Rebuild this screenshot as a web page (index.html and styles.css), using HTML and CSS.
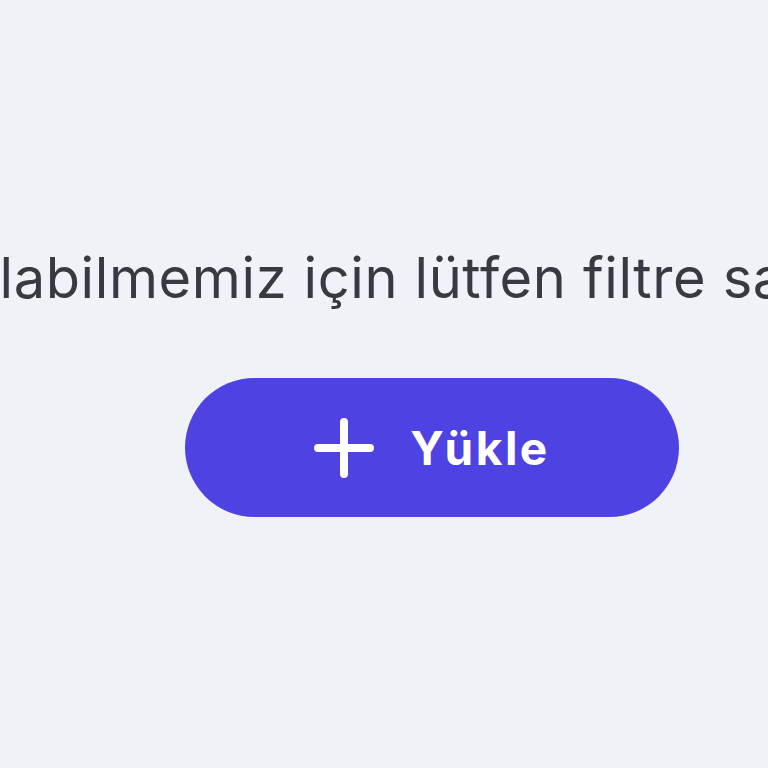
FILE: index.html
```html
<!DOCTYPE html>
<html lang="tr">
<head>
<meta charset="utf-8">
<link rel="stylesheet" href="styles.css">
</head>
<body>
<main class="empty">
  <p class="message">bulabilmemiz için lütfen filtre sağlayın</p>
  <button class="upload" type="button">
    <svg class="plus" viewBox="0 0 60 60" width="60" height="60" aria-hidden="true">
      <path d="M30 4V56M4 30H56" stroke="#fff" stroke-width="8" stroke-linecap="round" fill="none"/>
    </svg>
    <span class="label">Yükle</span>
  </button>
</main>
</body>
</html>
```
FILE: styles.css
```css
html, body {
  margin: 0;
  padding: 0;
  background: #f1f2f7;
  width: 768px;
  height: 768px;
  overflow: hidden;
}
.empty {
  box-sizing: border-box;
  width: 864px;
  padding-top: 240px;
  display: flex;
  flex-direction: column;
  align-items: center;
  font-family: Inter, "Open Sans", sans-serif;
}
.message {
  margin: 0;
  padding-left: 12px;
  white-space: nowrap;
  font-size: 56px;
  letter-spacing: 0.6px;
  line-height: 76px;
  color: #373943;
}
.upload {
  margin-top: 62px;
  display: flex;
  align-items: center;
  gap: 36px;
  height: 139px;
  padding: 0 129px;
  border: none;
  border-radius: 70px;
  background: #4f42e3;
  color: #fff;
  font-family: Inter, "Open Sans", sans-serif;
  font-weight: 700;
  font-size: 46px;
  letter-spacing: 2.5px;
  cursor: pointer;
}
.plus { display: block; }
.label { line-height: 1; }
```
